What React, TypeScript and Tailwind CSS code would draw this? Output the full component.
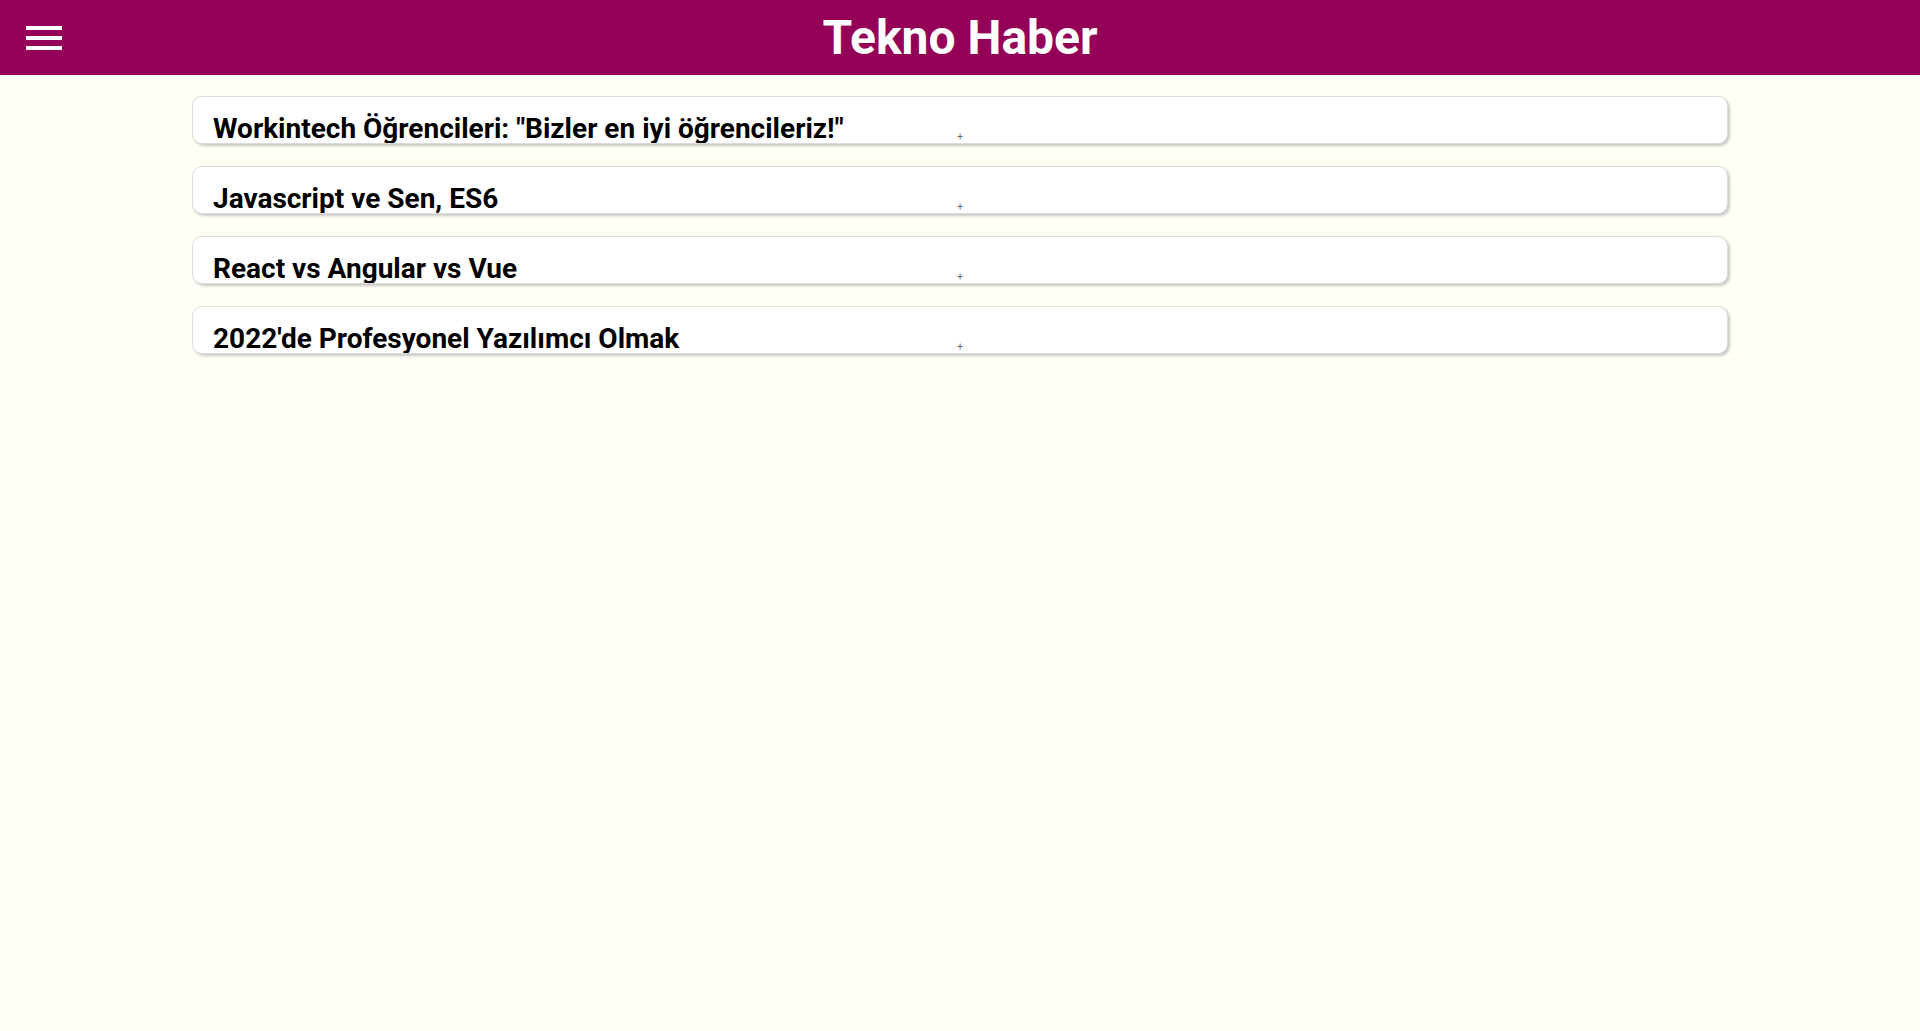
import React from "react";

const items = [
  'Workintech Öğrencileri: "Bizler en iyi öğrencileriz!"',
  "Javascript ve Sen, ES6",
  "React vs Angular vs Vue",
  "2022'de Profesyonel Yazılımcı Olmak",
];

export default function App() {
  return (
    <div
      className="min-h-[1031px] w-full bg-[#fffff5]"
      style={{ fontFamily: "Roboto, 'Noto Sans', sans-serif" }}
    >
      <header className="relative flex h-[75px] items-center justify-center bg-[#940058]">
        <button className="absolute left-[26px] top-[26px] flex flex-col gap-[6px]">
          <span className="block h-[4px] w-[36px] bg-white" />
          <span className="block h-[4px] w-[36px] bg-white" />
          <span className="block h-[4px] w-[36px] bg-white" />
        </button>
        <h1 className="text-[48px] font-bold leading-none text-white">Tekno Haber</h1>
      </header>
      <main className="mx-auto flex w-[1536px] flex-col gap-[22px] pt-[21px]">
        {items.map((t) => (
          <div
            key={t}
            className="relative h-[48px] overflow-hidden rounded-[10px] border border-[#dcdcdc] bg-white shadow-[2px_2px_3px_#c8c8c8]"
          >
            <h2 className="pl-[20px] pt-[15px] text-[28px] font-bold leading-[33px] text-black">
              {t}
            </h2>
            <span className="absolute left-1/2 top-[35px] -translate-x-1/2 text-[10px] leading-[10px] text-[#666]">
              +
            </span>
          </div>
        ))}
      </main>
    </div>
  );
}
